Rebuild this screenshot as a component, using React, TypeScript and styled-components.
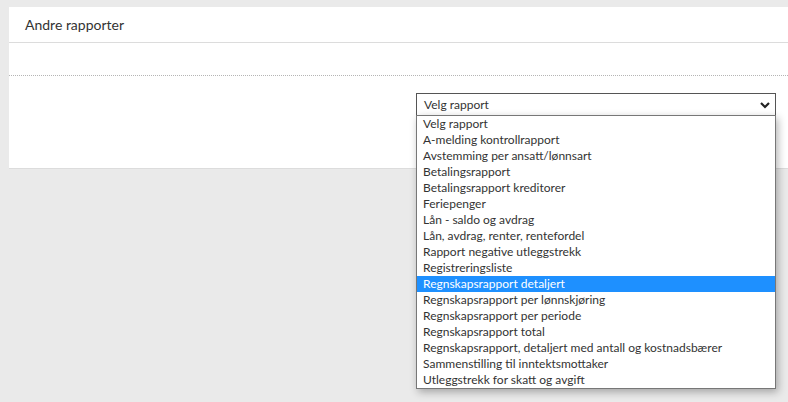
import React, { useState } from "react";
import styled, { createGlobalStyle } from "styled-components";

const GlobalStyle = createGlobalStyle`
  html, body {
    margin: 0;
    padding: 0;
    background: #eaeaea;
    font-family: Lato, "Open Sans", sans-serif;
    color: #333;
  }
`;

const Page = styled.div`
  padding: 7px 0 0 9px;
  height: 402px;
  box-sizing: border-box;
`;

const Card = styled.section`
  background: #fff;
  border-bottom: 1px solid #dcdcdc;
`;

const CardHeader = styled.header`
  height: 35px;
  padding: 0 16px;
  display: flex;
  align-items: center;
  font-size: 14px;
  color: #333;
  border-bottom: 1px solid #dcdcdc;
`;

const Spacer = styled.div`
  height: 32px;
  border-bottom: 1px dotted #b5b5b5;
`;

const CardBody = styled.div`
  height: 92px;
  display: flex;
  justify-content: flex-end;
  padding: 17px 12px 0 0;
  box-sizing: border-box;
`;

const SelectWrap = styled.div`
  position: relative;
  width: 360px;
`;

const SelectBox = styled.div`
  height: 23px;
  box-sizing: border-box;
  border: 1px solid #555;
  display: flex;
  align-items: center;
  justify-content: space-between;
  padding: 0 4px 0 7px;
  font-size: 12px;
  color: #333;
  background: #fff;
`;

const Chevron = styled.svg`
  width: 12px;
  height: 12px;
`;

const List = styled.ul`
  position: absolute;
  top: 22px;
  left: 0;
  right: 0;
  margin: 0;
  padding: 0;
  list-style: none;
  background: #fff;
  border: 1px solid #777;
  box-shadow: 2px 3px 8px rgba(0, 0, 0, 0.3);
`;

const Option = styled.li<{ $active: boolean }>`
  height: 16px;
  line-height: 16px;
  padding-left: 6px;
  font-size: 12px;
  white-space: nowrap;
  color: ${(p) => (p.$active ? "#fff" : "#333")};
  background: ${(p) => (p.$active ? "#1e90ff" : "transparent")};
`;

const options = [
  "Velg rapport",
  "A-melding kontrollrapport",
  "Avstemming per ansatt/lønnsart",
  "Betalingsrapport",
  "Betalingsrapport kreditorer",
  "Feriepenger",
  "Lån - saldo og avdrag",
  "Lån, avdrag, renter, rentefordel",
  "Rapport negative utleggstrekk",
  "Registreringsliste",
  "Regnskapsrapport detaljert",
  "Regnskapsrapport per lønnskjøring",
  "Regnskapsrapport per periode",
  "Regnskapsrapport total",
  "Regnskapsrapport, detaljert med antall og kostnadsbærer",
  "Sammenstilling til inntektsmottaker",
  "Utleggstrekk for skatt og avgift",
];

export default function App() {
  const [active, setActive] = useState(10);

  return (
    <>
      <GlobalStyle />
      <Page>
        <Card>
          <CardHeader>Andre rapporter</CardHeader>
          <Spacer />
          <CardBody>
            <SelectWrap>
              <SelectBox>
                <span>Velg rapport</span>
                <Chevron viewBox="0 0 12 12">
                  <path d="M2 4 L6 8 L10 4" fill="none" stroke="#222" strokeWidth="2.2" />
                </Chevron>
              </SelectBox>
              <List>
                {options.map((o, i) => (
                  <Option key={o} $active={i === active} onMouseEnter={() => setActive(i)}>
                    {o}
                  </Option>
                ))}
              </List>
            </SelectWrap>
          </CardBody>
        </Card>
      </Page>
    </>
  );
}
